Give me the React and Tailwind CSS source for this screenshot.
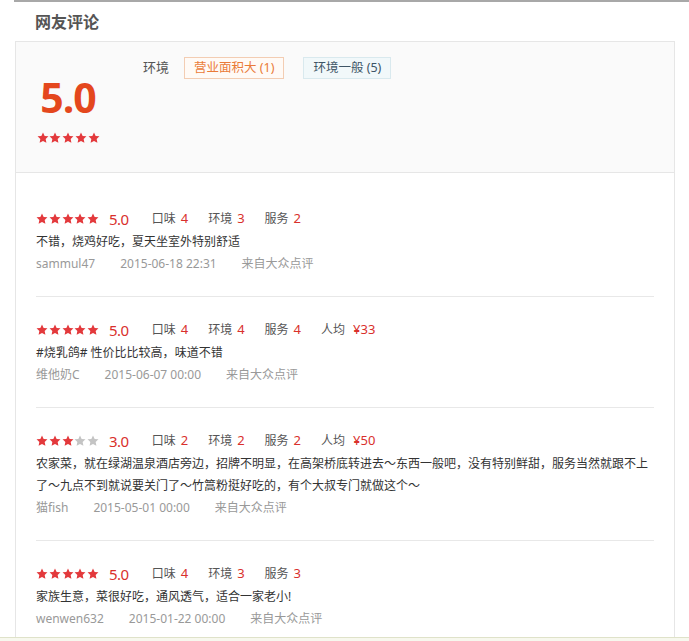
import React from "react";

const FONT = { fontFamily: '"Noto Sans", "Noto Sans CJK SC", sans-serif' };

function Star({ on = true }) {
  return (
    <svg viewBox="0 0 24 24" className="w-[12px] h-[12px] block">
      <path
        d="M12 0.8l3.3 7 7.6.9-5.6 5.2 1.5 7.6L12 17.8l-6.8 3.7 1.5-7.6L1.1 8.7l7.6-.9z"
        fill={on ? "#e3393c" : "#c4c4c4"}
      />
    </svg>
  );
}

function Stars({ n }) {
  return (
    <div className="flex gap-[0.75px]">
      {[0, 1, 2, 3, 4].map((i) => (
        <Star key={i} on={i < n} />
      ))}
    </div>
  );
}

const reviews = [
  {
    stars: 5,
    score: "5.0",
    taste: 4,
    env: 3,
    service: 2,
    text: ["不错，烧鸡好吃，夏天坐室外特别舒适"],
    user: "sammul47",
    date: "2015-06-18 22:31",
  },
  {
    stars: 5,
    score: "5.0",
    taste: 4,
    env: 4,
    service: 4,
    avg: "¥33",
    text: ["#烧乳鸽# 性价比比较高，味道不错"],
    user: "维他奶C",
    date: "2015-06-07 00:00",
  },
  {
    stars: 3,
    score: "3.0",
    taste: 2,
    env: 2,
    service: 2,
    avg: "¥50",
    text: [
      "农家菜，就在绿湖温泉酒店旁边，招牌不明显，在高架桥底转进去～东西一般吧，没有特别鲜甜，服务当然就跟不上",
      "了～九点不到就说要关门了～竹篙粉挺好吃的，有个大叔专门就做这个～",
    ],
    user: "猫fish",
    date: "2015-05-01 00:00",
  },
  {
    stars: 5,
    score: "5.0",
    taste: 4,
    env: 3,
    service: 3,
    text: ["家族生意，菜很好吃，通风透气，适合一家老小!"],
    user: "wenwen632",
    date: "2015-01-22 00:00",
  },
];

function Review({ r, last }) {
  return (
    <div className={"pt-[21px] pb-[21px] " + (last ? "" : "border-b border-[#e8e8e8]")}>
      <div className="h-[24px] flex items-center text-[12px] text-[#555]">
        <Stars n={r.stars} />
        <span className="ml-[10px] text-[15px] text-[#d9302c] leading-none tracking-[-0.5px]">{r.score}</span>
        <span className="ml-[23px]">口味</span>
        <span className="ml-[5px] text-[13px] text-[#d9302c]">{r.taste}</span>
        <span className="ml-[20px]">环境</span>
        <span className="ml-[5px] text-[13px] text-[#d9302c]">{r.env}</span>
        <span className="ml-[20px]">服务</span>
        <span className="ml-[5px] text-[13px] text-[#d9302c]">{r.service}</span>
        {r.avg && (
          <>
            <span className="ml-[20px]">人均</span>
            <span className="ml-[8px] text-[13px] text-[#d9302c]">{r.avg}</span>
          </>
        )}
      </div>
      {r.text.map((line, i) => (
        <p key={i} className="whitespace-nowrap text-[12px] leading-[22px] text-[#333]">
          {line}
        </p>
      ))}
      <div className="h-[22px] flex items-center gap-[25px] text-[12px] text-[#999]">
        <span>{r.user}</span>
        <span>{r.date}</span>
        <span>来自大众点评</span>
      </div>
    </div>
  );
}

export default function App() {
  return (
    <div className="w-[689px] h-[641px] bg-white overflow-hidden" style={FONT}>
      <div className="h-[637px] overflow-hidden">
        <div className="ml-[14px] border-t-2 border-[#a8a8a8]" />
        <div className="h-[39px] flex items-center pl-[35px] text-[16px] font-bold text-[#555]">
          网友评论
        </div>
        <div className="ml-[15px] w-[660px] border border-[#e6e6e6]">
          <div className="h-[131px] bg-[#fafafa] border-b border-[#e6e6e6] flex">
            <div className="w-[104px] flex flex-col items-center pt-[35px]">
              <div
                className="h-[40px] leading-[40px] text-[41px] font-bold text-[#e4471d] tracking-[-1px]"
                style={{ fontFamily: '"Open Sans", "Noto Sans", sans-serif' }}
              >
                5.0
              </div>
              <div className="mt-[15px]">
                <Stars n={5} />
              </div>
            </div>
            <div className="ml-[23px] pt-[15px] flex items-start">
              <div className="h-[22px] flex items-center text-[13px] text-[#555]">环境</div>
              <div className="ml-[15px] h-[22px] px-[9px] flex items-center border border-[#f3cdb3] bg-[#fffaf6] text-[12.5px] text-[#ea7a38]">
                营业面积大 (1)
              </div>
              <div className="ml-[19px] h-[22px] px-[9px] flex items-center border border-[#d9e9ee] bg-[#f1f8fa] text-[12.5px] text-[#3e5566]">
                环境一般 (5)
              </div>
            </div>
          </div>
          <div className="px-5 pt-[13px]">
            {reviews.map((r, i) => (
              <Review key={i} r={r} last={i === reviews.length - 1} />
            ))}
          </div>
        </div>
      </div>
      <div className="h-px bg-[#dfe2c9]" />
      <div className="h-[3px] bg-[#f7f8ee]" />
    </div>
  );
}
